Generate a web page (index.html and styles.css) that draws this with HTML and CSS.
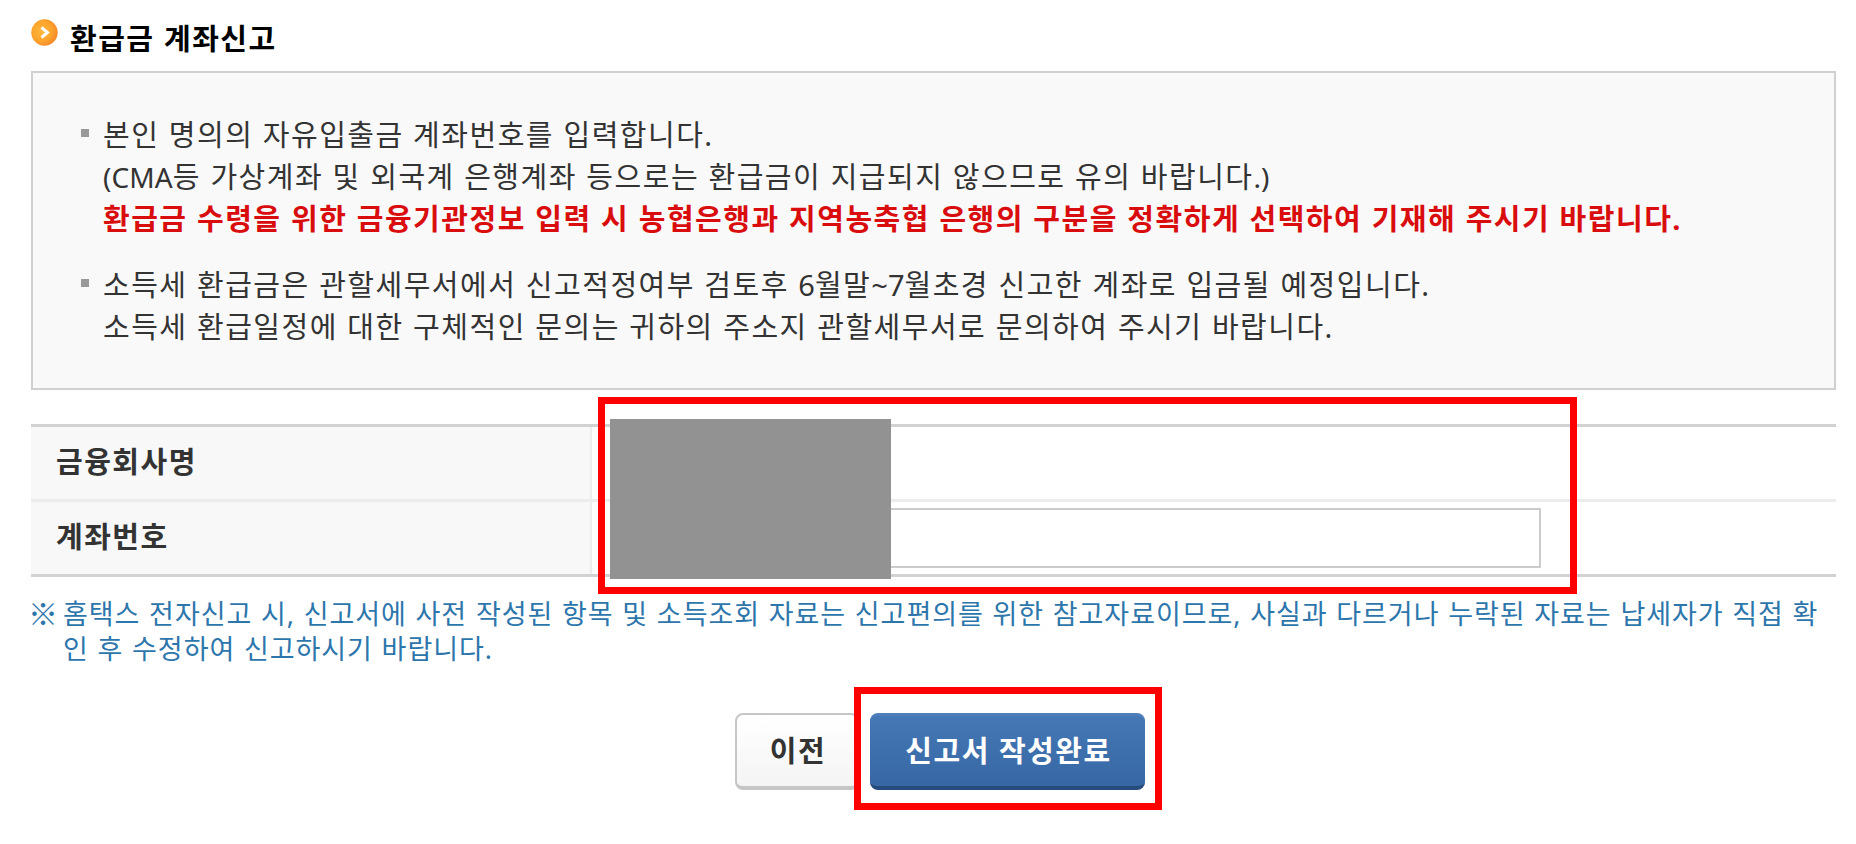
FILE: index.html
```html
<!DOCTYPE html>
<html lang="ko">
<head>
    <meta charset="UTF-8">
    <title>환급금 계좌신고</title>
    <link rel="stylesheet" href="styles.css">
</head>
<body>
    <div class="container">
        <div class="titlebar">
            <svg class="titleicon" viewBox="0 0 27 27">
                <defs>
                    <radialGradient id="orange" cx="40%" cy="45%" r="60%">
                        <stop offset="0" stop-color="#ffb83d"/>
                        <stop offset="0.6" stop-color="#fda52c"/>
                        <stop offset="1" stop-color="#f58a2c"/>
                    </radialGradient>
                </defs>
                <circle cx="13.5" cy="13.5" r="13.2" fill="url(#orange)"/>
                <path d="M10.5 8.5L16.5 13.5L10.5 18.5" fill="none" stroke="#fff" stroke-width="3"/>
            </svg>
            <h2 class="title">환급금 계좌신고</h2>
        </div>

        <ul class="infobox">
            <li>
                본인 명의의 자유입출금 계좌번호를 입력합니다.<br>
                <span class="latin">(CMA</span>등 가상계좌 및 외국계 은행계좌 등으로는 환급금이 지급되지 않으므로 유의 바랍니다<span class="latin">.)</span><br>
                <strong class="warn">환급금 수령을 위한 금융기관정보 입력 시 농협은행과 지역농축협 은행의 구분을 정확하게 선택하여 기재해 주시기 바랍니다.</strong>
            </li>
            <li>
                소득세 환급금은 관할세무서에서 신고적정여부 검토후 <span class="num">6</span>월말<span class="num">~7</span>월초경 신고한 계좌로 입금될 예정입니다.<br>
                소득세 환급일정에 대한 구체적인 문의는 귀하의 주소지 관할세무서로 문의하여 주시기 바랍니다.
            </li>
        </ul>

        <div class="formtable">
            <div class="row">
                <div class="label">금융회사명</div>
                <div class="field"></div>
            </div>
            <div class="row">
                <label class="label" for="account">계좌번호</label>
                <div class="field"><input type="text" id="account" class="account"></div>
            </div>
            <div class="mask"></div>
            <div class="mark markform"></div>
        </div>

        <div class="note">
            <span class="notemark">※</span>
            <p>홈택스 전자신고 시, 신고서에 사전 작성된 항목 및 소득조회 자료는 신고편의를 위한 참고자료이므로, 사실과 다르거나 누락된 자료는 납세자가 직접 확<br>인 후 수정하여 신고하시기 바랍니다.</p>
        </div>

        <div class="btncontainer">
            <button type="button" class="btn prev">이전</button>
            <div class="donewrap">
                <button type="button" class="btn done">신고서 작성완료</button>
                <div class="mark markdone"></div>
            </div>
        </div>
    </div>
</body>
</html>
```

FILE: styles.css
```css
*{
    margin: 0;
    padding: 0;
    box-sizing: border-box;
}
body {
    min-height: 100vh;
    font-family: "Noto Sans", "Noto Sans CJK KR", sans-serif;
    font-size: 29px;
    letter-spacing: 1.5px;
    word-spacing: 0.4px;
    line-height: 42px;
    color: #333;
    background-color: #fff;
}
.container{
    width: 1805px;
    margin-left: 31px;
    white-space: nowrap;
}

.titlebar{
    display: flex;
    height: 71px;
    padding-top: 18px;
    gap: 12px;
}
.titleicon{
    width: 27px;
    height: 27px;
    margin-top: 1px;
}
.title{
    font-size: 29px;
    color: #000;
}

.infobox{
    height: 319px;
    padding: 41px 0 0 70px;
    border: 2px solid #d0d0d0;
    background-color: #f9f9f9;
    list-style: none;
}
.infobox li{
    position: relative;
    margin-bottom: 24px;
}
.infobox li::before{
    content: "";
    position: absolute;
    left: -22px;
    top: 15px;
    width: 8px;
    height: 8px;
    background-color: #999;
}
.latin{
    font-size: 28px;
    letter-spacing: 0.1px;
}
.num{
    letter-spacing: 0;
}
.warn{
    color: #d90d0d;
}

.formtable{
    position: relative;
    margin-top: 34px;
    border-top: 3px solid #d2d2d2;
    border-bottom: 3px solid #d2d2d2;
}
.row{
    display: flex;
    height: 72px;
}
.row:first-child{
    height: 75px;
    border-bottom: 3px solid #ececec;
}
.label{
    width: 561px;
    padding: 14px 0 0 25px;
    border-right: 2px solid #ececec;
    background-color: #f8f8f8;
    font-weight: bold;
}
.field{
    flex: 1;
    padding: 6px 0 0 18px;
}
.account{
    display: block;
    width: 931px;
    height: 60px;
    border: 2px solid #cbcbcb;
    background-color: #fff;
}
.mask{
    position: absolute;
    left: 579px;
    top: -8px;
    width: 281px;
    height: 160px;
    background-color: #929292;
}
.mark{
    position: absolute;
    border: 7px solid #f00;
}
.markform{
    left: 567px;
    top: -30px;
    width: 979px;
    height: 197px;
}

.note{
    display: flex;
    margin-top: 20px;
    font-size: 27px;
    letter-spacing: 0.94px;
    word-spacing: 0.8px;
    line-height: 34.5px;
    color: #2d76ac;
}
.notemark{
    width: 35px;
    margin-left: -3px;
    font-family: "Noto Sans CJK KR", sans-serif;
    font-size: 30px;
    font-weight: 300;
    line-height: 30px;
}

.btncontainer{
    display: flex;
    margin-top: 47px;
    padding-left: 704px;
    gap: 11px;
}
.btn{
    display: block;
    height: 77px;
    padding: 0 0 4px 2px;
    border-radius: 8px;
    font-family: inherit;
    font-size: 29px;
    font-weight: bold;
    letter-spacing: 1.5px;
    white-space: nowrap;
}
.prev{
    width: 124px;
    border: 2px solid #c6c6c6;
    border-bottom-width: 4px;
    background: linear-gradient(#fff, #f4f4f4);
    color: #333;
}
.donewrap{
    position: relative;
}
.done{
    width: 275px;
    border: none;
    border-top: 3px solid #4f7fba;
    border-bottom: 4px solid #264b7d;
    background: linear-gradient(#4678b6, #3767a5);
    color: #fff;
}
.markdone{
    left: -16px;
    top: -26px;
    width: 308px;
    height: 123px;
}
```
